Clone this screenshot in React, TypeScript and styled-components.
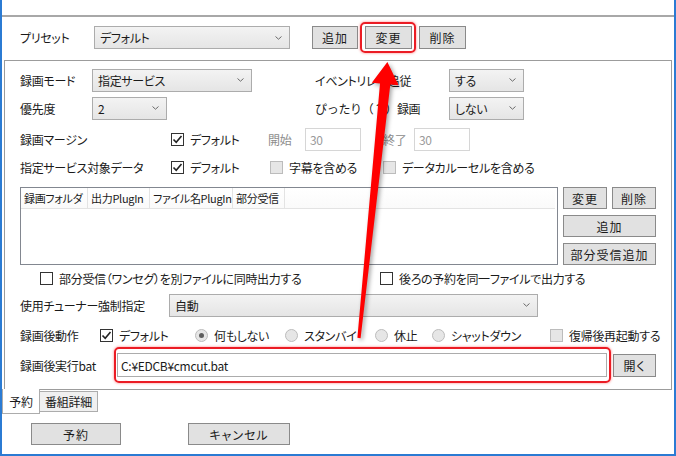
import React from "react";
import styled, { createGlobalStyle } from "styled-components";

const GlobalStyle = createGlobalStyle`
  html, body { margin: 0; padding: 0; background: #fff; }
  body {
    font-family: "Noto Sans CJK JP", "Noto Sans", sans-serif;
    font-size: 12px;
    letter-spacing: -0.3px;
    color: #1a1a1a;
    font-feature-settings: "palt";
  }
  * { box-sizing: border-box; }
`;

const Page = styled.div`
  position: relative;
  width: 676px;
  height: 456px;
`;

const Window = styled.div`
  width: 676px;
  height: 456px;
  border: 2px solid #2b7bd3;
  border-top: none;
  background: #fff;
  overflow: hidden;
`;

const TopBar = styled.div`
  height: 17px;
  border-bottom: 2px solid #a8a8a8;
`;

const PresetRow = styled.div`
  display: flex;
  align-items: center;
  height: 23px;
  margin-top: 9px;
  padding-left: 18px;
`;

const Label = styled.span<{ $w?: number; $pl?: number; $muted?: boolean; $wide?: boolean }>`
  ${(p) => (p.$w ? `width: ${p.$w}px;` : "")}
  padding-left: ${(p) => p.$pl ?? 0}px;
  white-space: nowrap;
  color: ${(p) => (p.$muted ? "#8c8c8c" : "#1a1a1a")};
  ${(p) => (p.$wide ? `font-feature-settings: normal;` : "")}
`;

const ComboBox = styled.div<{ $w: number }>`
  display: flex;
  align-items: center;
  justify-content: space-between;
  width: ${(p) => p.$w}px;
  height: 23px;
  padding: 0 7px 0 5px;
  border: 1px solid #acacac;
  background: linear-gradient(#f3f3f3, #e5e5e5);
  white-space: nowrap;
`;

const Button = styled.button<{ $w?: number; $h?: number; $ml?: number }>`
  width: ${(p) => (p.$w ? `${p.$w}px` : "100%")};
  height: ${(p) => p.$h ?? 23}px;
  margin: 0 0 0 ${(p) => p.$ml ?? 0}px;
  padding: 0;
  border: 1px solid #8a8a8a;
  background: #e1e1e1;
  font: inherit;
  color: #1a1a1a;
  letter-spacing: 1px;
`;

const Marked = styled.span<{ $t: number; $r: number; $b: number; $l: number; $ml?: number }>`
  position: relative;
  display: inline-flex;
  margin-left: ${(p) => p.$ml ?? 0}px;
  &::after {
    content: "";
    position: absolute;
    top: -${(p) => p.$t}px;
    right: -${(p) => p.$r}px;
    bottom: -${(p) => p.$b}px;
    left: -${(p) => p.$l}px;
    border: 2px solid #eb1c24;
    border-radius: 5px;
    box-shadow: 0 0 2px 1px rgba(255, 90, 90, 0.35);
    pointer-events: none;
  }
`;

const Panel = styled.div`
  display: flex;
  flex-direction: column;
  margin: 11px 0 0 2px;
  width: 668px;
  height: 330px;
  padding-left: 15px;
  border: 1px solid #9c9c9c;
`;

const Row = styled.div<{ $cols: string; $mt: number; $h: number; $gap?: number }>`
  display: grid;
  grid-template-columns: ${(p) => p.$cols};
  column-gap: ${(p) => p.$gap ?? 0}px;
  align-items: center;
  margin-top: ${(p) => p.$mt}px;
  height: ${(p) => p.$h}px;
`;

const CheckItem = styled.label`
  display: flex;
  align-items: center;
  gap: 6px;
  white-space: nowrap;
`;

const Box = styled.span<{ $disabled?: boolean }>`
  display: inline-flex;
  align-items: center;
  justify-content: center;
  flex: none;
  width: 13px;
  height: 13px;
  border: 1px solid ${(p) => (p.$disabled ? "#bcbcbc" : "#333")};
  background: ${(p) => (p.$disabled ? "#e6e6e6" : "#fff")};
`;

const Round = styled.span`
  display: inline-flex;
  align-items: center;
  justify-content: center;
  flex: none;
  width: 13px;
  height: 13px;
  border: 1px solid #bcbcbc;
  border-radius: 50%;
  background: #e6e6e6;
`;

const Dot = styled.span`
  width: 5px;
  height: 5px;
  border-radius: 50%;
  background: #5e5e5e;
`;

const NumInput = styled.div`
  display: flex;
  align-items: center;
  width: 56px;
  height: 23px;
  padding-left: 4px;
  border: 1px solid #d6d6d6;
  color: #9a9a9a;
`;

const PathInput = styled.div`
  display: flex;
  align-items: center;
  width: 490px;
  height: 24px;
  padding-left: 3px;
  border: 1px solid #acacac;
  background: #fff;
`;

const ListView = styled.div`
  width: 538px;
  height: 78px;
  border: 1px solid #828790;
  background: #fff;
`;

const ListHeader = styled.div`
  display: flex;
  height: 21px;
  margin-right: 2px;
  border-bottom: 1px solid #e3e3e3;
  background: linear-gradient(#fff, #fafafa);
`;

const HeaderCell = styled.div<{ $w: number }>`
  display: flex;
  align-items: center;
  width: ${(p) => p.$w}px;
  padding-left: 3px;
  border-right: 1px solid #e3e3e3;
  white-space: nowrap;
  font-size: 11px;
  letter-spacing: -0.3px;
`;

const ListButtons = styled.div`
  display: grid;
  grid-template-columns: 44px 44px;
  grid-auto-rows: 22px;
  column-gap: 5px;
  row-gap: 6px;
  align-self: start;
  & > button:nth-child(n + 3) { grid-column: 1 / 3; }
`;

const TabStrip = styled.div`
  display: flex;
  align-items: flex-start;
  margin-top: -1px;
`;

const Tab = styled.div<{ $active?: boolean }>`
  display: flex;
  align-items: center;
  justify-content: center;
  width: ${(p) => (p.$active ? 38 : 58)}px;
  height: ${(p) => (p.$active ? 25 : 21)}px;
  border: 1px solid #acacac;
  border-top: ${(p) => (p.$active ? "none" : "1px solid #acacac")};
  border-left: ${(p) => (p.$active ? "1px solid #acacac" : "none")};
  background: ${(p) => (p.$active ? "#fff" : "#f0f0f0")};
  margin-top: ${(p) => (p.$active ? 0 : 2)}px;
`;

const Footer = styled.div`
  display: flex;
  align-items: center;
  gap: 67px;
  margin-top: 9px;
  padding-left: 29px;
`;

const Overlay = styled.svg`
  position: absolute;
  top: 0;
  left: 0;
  pointer-events: none;
  filter: drop-shadow(2px 2px 2px rgba(0, 0, 0, 0.35));
`;

const Chevron = () => (
  <svg width="7" height="4" viewBox="0 0 7 4">
    <path d="M0.5 0.5 L3.5 3.2 L6.5 0.5" fill="none" stroke="#6a6a6a" strokeWidth="1" />
  </svg>
);

const Combo: React.FC<{ w: number; value: string }> = ({ w, value }) => (
  <ComboBox $w={w}>
    <span>{value}</span>
    <Chevron />
  </ComboBox>
);

const Check: React.FC<{ label: string; checked?: boolean; disabled?: boolean }> = ({ label, checked, disabled }) => (
  <CheckItem>
    <Box $disabled={disabled}>
      {checked && (
        <svg width="11" height="11" viewBox="0 0 11 11">
          <path d="M1.5 5.5 L4.2 8.3 L9.5 2" fill="none" stroke="#222" strokeWidth="1.6" />
        </svg>
      )}
    </Box>
    <span>{label}</span>
  </CheckItem>
);

const Radio: React.FC<{ label: string; selected?: boolean }> = ({ label, selected }) => (
  <CheckItem>
    <Round>{selected && <Dot />}</Round>
    <span>{label}</span>
  </CheckItem>
);

const App: React.FC = () => {
  const columns = [
    { name: "録画フォルダ", w: 67 },
    { name: "出力PlugIn", w: 62 },
    { name: "ファイル名PlugIn", w: 83 },
    { name: "部分受信", w: 52 },
  ];

  return (
    <>
      <GlobalStyle />
      <Page>
        <Window>
          <TopBar />
          <PresetRow>
            <Label $w={74}>プリセット</Label>
            <Combo w={196} value="デフォルト" />
            <Button $w={46} $ml={22}>追加</Button>
            <Marked $t={4} $r={4} $b={4} $l={5} $ml={7}>
              <Button $w={47}>変更</Button>
            </Marked>
            <Button $w={47} $ml={7}>削除</Button>
          </PresetRow>

          <Panel>
            <Row $cols="72px 160px 197px 75px" $mt={7} $h={24}>
              <Label>録画モード</Label>
              <Combo w={160} value="指定サービス" />
              <Label $pl={63}>イベントリレー追従</Label>
              <Combo w={75} value="する" />
            </Row>
            <Row $cols="72px 75px 282px 75px" $mt={4} $h={24}>
              <Label>優先度</Label>
              <Combo w={75} value="2" />
              <Label $pl={148} $wide>ぴったり（？）録画</Label>
              <Combo w={75} value="しない" />
            </Row>
            <Row $cols="151px 97px 37px 56px 53px 56px" $mt={7} $h={24}>
              <Label>録画マージン</Label>
              <Check label="デフォルト" checked />
              <Label $muted>開始</Label>
              <NumInput>30</NumInput>
              <Label $muted $pl={22}>終了</Label>
              <NumInput>30</NumInput>
            </Row>
            <Row $cols="151px 99px 113px auto" $mt={4} $h={24}>
              <Label>指定サービス対象データ</Label>
              <Check label="デフォルト" checked />
              <Check label="字幕を含める" disabled />
              <Check label="データカルーセルを含める" disabled />
            </Row>
            <Row $cols="538px 93px" $gap={5} $mt={8} $h={78}>
              <ListView>
                <ListHeader>
                  {columns.map((c) => (
                    <HeaderCell key={c.name} $w={c.w}>{c.name}</HeaderCell>
                  ))}
                </ListHeader>
              </ListView>
              <ListButtons>
                <Button $h={22}>変更</Button>
                <Button $h={22}>削除</Button>
                <Button $h={22}>追加</Button>
                <Button $h={22}>部分受信追加</Button>
              </ListButtons>
            </Row>
            <Row $cols="20px 340px auto" $mt={5} $h={16}>
              <span />
              <Check label="部分受信（ワンセグ）を別ファイルに同時出力する" />
              <Check label="後ろの予約を同一ファイルで出力する" />
            </Row>
            <Row $cols="149px 369px" $mt={7} $h={24}>
              <Label>使用チューナー強制指定</Label>
              <Combo w={369} value="自動" />
            </Row>
            <Row $cols="80px 95px 90px 90px 57px 118px auto" $mt={8} $h={20}>
              <Label>録画後動作</Label>
              <Check label="デフォルト" checked />
              <Radio label="何もしない" selected />
              <Radio label="スタンバイ" />
              <Radio label="休止" />
              <Radio label="シャットダウン" />
              <Check label="復帰後再起動する" disabled />
            </Row>
            <Row $cols="91px 490px 43px" $gap={6} $mt={7} $h={26}>
              <Label>録画後実行bat</Label>
              <Marked $t={6} $r={4} $b={6} $l={3}>
                <PathInput>C:¥EDCB¥cmcut.bat</PathInput>
              </Marked>
              <Button $h={23}>開く</Button>
            </Row>
          </Panel>

          <TabStrip>
            <Tab $active>予約</Tab>
            <Tab>番組詳細</Tab>
          </TabStrip>

          <Footer>
            <Button $w={90} $h={22}>予約</Button>
            <Button $w={102} $h={22}>キャンセル</Button>
          </Footer>
        </Window>

        <Overlay width="676" height="456" viewBox="0 0 676 456">
          <polygon
            points="387.4,62 398.6,85.3 390.3,84.5 360.6,338.2 357.4,337.8 380,83.5 371.8,82.7"
            fill="#ff0000"
          />
        </Overlay>
      </Page>
    </>
  );
};

export default App;
